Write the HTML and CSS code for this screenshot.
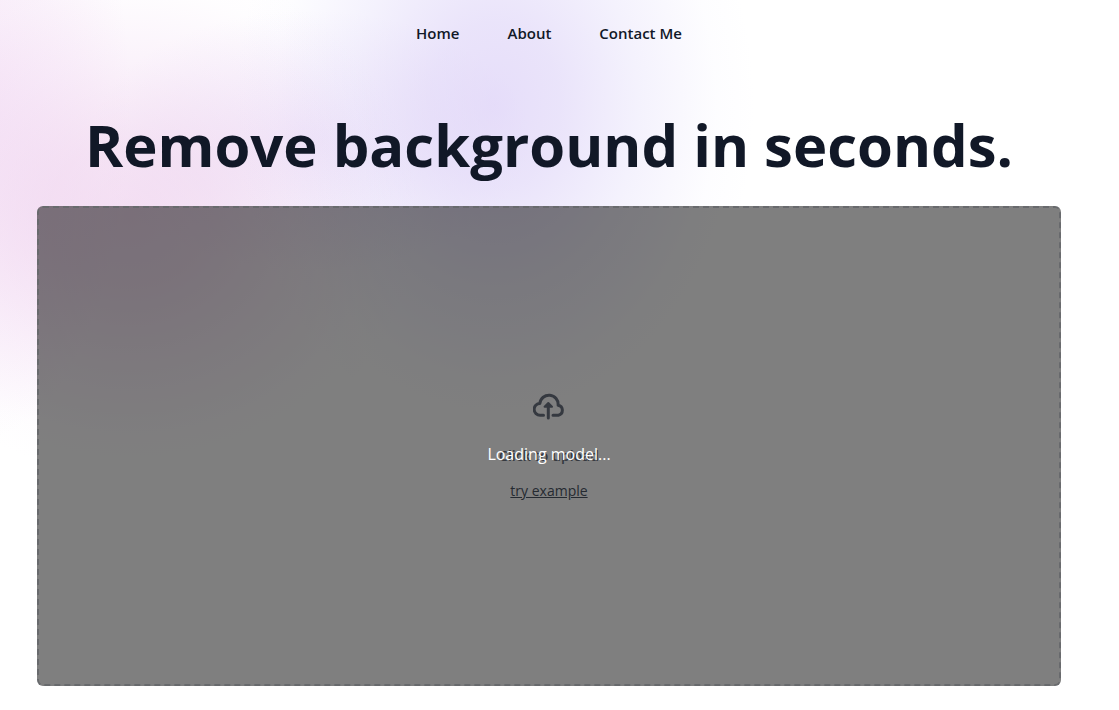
FILE: index.html
```html
<!DOCTYPE html>
<html lang="en">
<head>
<meta charset="utf-8">
<meta name="viewport" content="width=device-width, initial-scale=1">
<title>Remove background in seconds.</title>
<link rel="stylesheet" href="styles.css">
</head>
<body>
<div class="page">
  <header class="site-header">
    <nav class="nav" aria-label="Main">
      <a class="nav-link" href="#home">Home</a>
      <a class="nav-link" href="#about">About</a>
      <a class="nav-link" href="#contact">Contact Me</a>
    </nav>
  </header>
  <main class="main">
    <h1 class="title">Remove background in seconds.</h1>
    <section class="dropzone">
      <button class="upload" type="button">
        <svg class="upload-icon" viewBox="0 0 32 32" aria-hidden="true">
          <path class="cloud" d="M10.5 23.2H7.2A5.9 5.9 0 0 1 6.9 11.4A9.1 9.1 0 0 1 25.1 13.2A5.1 5.1 0 0 1 25.4 23.2H20"/>
          <path class="arrow-stem" d="M15.3 14V26"/>
          <path class="arrow-head" d="M15.3 11L19 14.8H11.6Z"/>
        </svg>
        <span class="upload-label">Click to upload</span>
      </button>
      <a class="example" href="#example">try example</a>
      <div class="overlay" role="status">Loading model...</div>
    </section>
  </main>
</div>
</body>
</html>
```
FILE: styles.css
```css
* {
  box-sizing: border-box;
}

body {
  margin: 0;
  background: #fff;
  color: #111827;
  font-family: "Open Sans", "Noto Sans", sans-serif;
  font-size: 16px;
  line-height: 24px;
}

.page {
  min-height: 100vh;
  padding: 0 58px 24px 37px;
  background:
    radial-gradient(ellipse 260px 330px at 495px 105px, rgba(205, 188, 244, 0.5), rgba(205, 190, 244, 0.42) 25%, rgba(205, 195, 246, 0.22) 55%, rgba(205, 200, 250, 0.04) 85%, transparent) no-repeat,
    radial-gradient(ellipse 290px 260px at 130px 215px, rgba(228, 178, 226, 0.42), rgba(228, 180, 226, 0.34) 28%, rgba(230, 185, 232, 0.17) 60%, rgba(230, 195, 240, 0.03) 87%, transparent) no-repeat,
    radial-gradient(ellipse 150px 340px at -20px 100px, rgba(234, 195, 236, 0.38), rgba(234, 195, 236, 0.2) 50%, transparent) no-repeat,
    radial-gradient(ellipse 220px 130px at 310px 140px, rgba(218, 196, 240, 0.32), rgba(218, 196, 240, 0.16) 50%, transparent) no-repeat,
    #fff;
}

.site-header {
  padding: 21px 0 23px;
}

.nav {
  display: flex;
  justify-content: center;
  gap: 48px;
}

.nav-link {
  color: #111827;
  font-size: 15px;
  font-weight: 600;
  text-decoration: none;
}

.main {
  max-width: 1024px;
  margin: 0 auto;
}

.title {
  margin: 41px 0 25px;
  font-size: 58px;
  font-weight: 700;
  line-height: 72px;
  text-align: center;
}

.dropzone {
  position: relative;
  display: flex;
  flex-direction: column;
  align-items: center;
  justify-content: center;
  gap: 11px;
  min-height: 480px;
  padding-top: 2px;
  border: 2px dashed #d1d5db;
  border-radius: 6px;
}

.upload {
  display: flex;
  flex-direction: column;
  align-items: center;
  gap: 20px;
  padding: 0;
  border: 0;
  background: none;
  color: #6b7280;
  font: inherit;
}

.upload-icon {
  width: 32px;
  height: 32px;
  fill: none;
  stroke: #6b7280;
  stroke-width: 3;
  stroke-linecap: round;
  stroke-linejoin: round;
}

.arrow-head {
  fill: #6b7280;
  stroke-width: 2;
}

.upload-label {
  font-size: 14px;
  font-weight: 600;
}

.example {
  color: #4b5563;
  font-size: 14px;
  text-decoration: underline;
}

.overlay {
  position: absolute;
  inset: -2px;
  display: flex;
  align-items: center;
  justify-content: center;
  padding-top: 16px;
  border-radius: 6px;
  background: rgba(0, 0, 0, 0.5);
  color: #fff;
}
```
